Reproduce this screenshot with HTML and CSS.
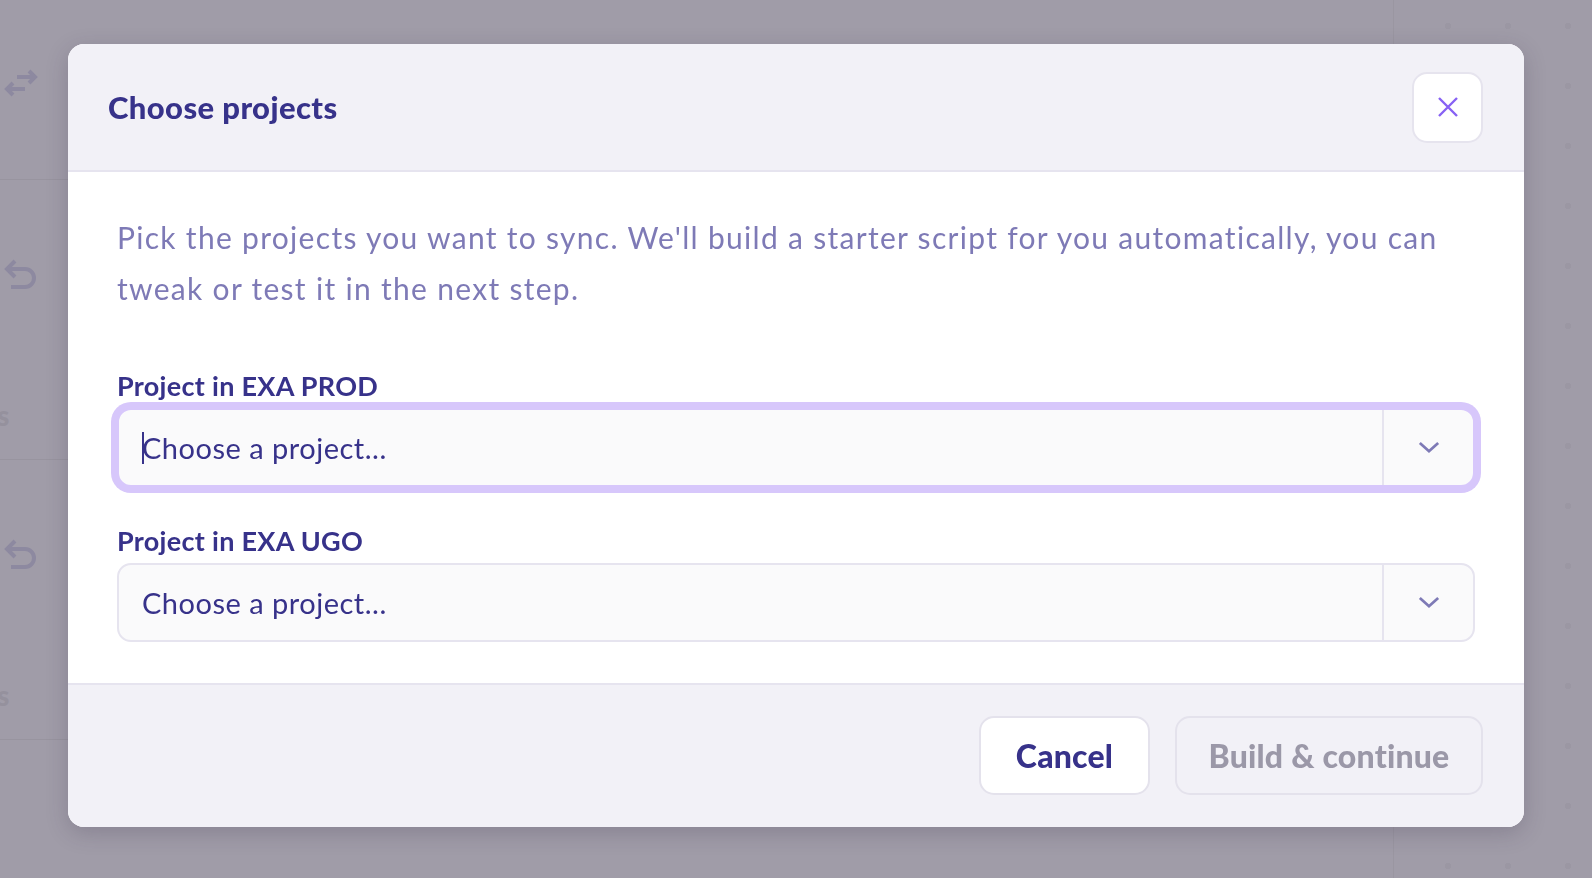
FILE: index.html
```html
<!DOCTYPE html>
<html lang="en">
<head>
  <meta charset="UTF-8" />
  <title>Choose projects</title>
  <link rel="stylesheet" href="styles.css">
</head>
<body>

  <!-- page underneath the dialog -->
  <div class="page">
    <aside class="sidebar">
      <div class="side-head">
        <svg class="side-icon" width="36" height="30" viewBox="0 0 36 30">
          <path d="M15 9 H33 M27 3 L33 9 L27 15" />
          <path d="M23 21 H5 M11 15 L5 21 L11 27" />
        </svg>
      </div>
      <div class="side-row">
        <svg class="side-icon" width="34" height="36" viewBox="0 0 34 36">
          <path d="M12 3 L4 11 L12 19 M4 11 H22 A9 9 0 0 1 22 29 H8" />
        </svg>
        <span class="side-label">s</span>
      </div>
      <div class="side-row">
        <svg class="side-icon" width="34" height="36" viewBox="0 0 34 36">
          <path d="M12 3 L4 11 L12 19 M4 11 H22 A9 9 0 0 1 22 29 H8" />
        </svg>
        <span class="side-label">s</span>
      </div>
    </aside>
    <main class="workspace"></main>
    <section class="canvas"></section>
  </div>

  <div class="overlay">
    <div class="modal">
      <header class="modal-head">
        <h2 class="modal-title">Choose projects</h2>
        <button class="btn-close" aria-label="Close">
          <svg width="22" height="22" viewBox="0 0 22 22">
            <path d="M2 2 L20 20 M20 2 L2 20" />
          </svg>
        </button>
      </header>

      <div class="modal-body">
        <p class="intro">Pick the projects you want to sync. We'll build a starter script for you automatically, you can tweak or test it in the next step.</p>

        <div class="field">
          <label class="field-label">Project in EXA PROD</label>
          <div class="select is-focused">
            <span class="select-value"><span class="caret"></span>Choose a project...</span>
            <span class="select-toggle">
              <svg width="24" height="14" viewBox="0 0 24 14"><path d="M2 2 L12 11 L22 2" /></svg>
            </span>
          </div>
        </div>

        <div class="field">
          <label class="field-label">Project in EXA UGO</label>
          <div class="select">
            <span class="select-value">Choose a project...</span>
            <span class="select-toggle">
              <svg width="24" height="14" viewBox="0 0 24 14"><path d="M2 2 L12 11 L22 2" /></svg>
            </span>
          </div>
        </div>
      </div>

      <footer class="modal-foot">
        <button class="btn btn-cancel">Cancel</button>
        <button class="btn btn-primary" disabled>Build &amp; continue</button>
      </footer>
    </div>
  </div>

</body>
</html>
```

FILE: styles.css
```css
body {
  margin: 0;
  height: 878px;
  overflow: hidden;
  background-color: #a09ca8;
  font-family: Lato, "Open Sans", sans-serif;
}

/* dimmed page */
.page {
  display: flex;
  height: 100%;
}
.sidebar {
  width: 400px;
  flex-shrink: 0;
}
.side-head {
  height: 180px;
  box-sizing: border-box;
  border-bottom: 1px solid #98949f;
  padding: 68px 0 0 2px;
}
.side-row {
  height: 280px;
  box-sizing: border-box;
  border-bottom: 1px solid #98949f;
  padding: 78px 0 0 3px;
}
.side-icon {
  display: block;
  fill: none;
  stroke: #8d89a0;
  stroke-width: 4;
}
.side-label {
  display: block;
  margin: 104px 0 0 -6px;
  font-size: 28px;
  font-weight: 900;
  color: #95919d;
}
.workspace {
  flex: 1;
}
.canvas {
  width: 198px;
  border-left: 1px solid #9a96a1;
  background-image: radial-gradient(circle, #9b97a3 3px, transparent 3.5px);
  background-size: 60px 60px;
  background-position: 24px -4px;
}

/* dialog */
.overlay {
  position: fixed;
  top: 0;
  left: 0;
  right: 0;
  bottom: 0;
  display: flex;
  justify-content: center;
  align-items: flex-start;
  padding-top: 44px;
}
.modal {
  width: 1456px;
  background-color: #ffffff;
  border-radius: 16px;
  overflow: hidden;
  box-shadow: 0 6px 22px rgba(50, 40, 70, 0.22);
}
.modal-head {
  height: 128px;
  box-sizing: border-box;
  display: flex;
  align-items: center;
  justify-content: space-between;
  padding: 0 41px 0 40px;
  background-color: #f2f1f7;
  border-bottom: 2px solid #e6e4ef;
}
.modal-title {
  margin: 0;
  font-size: 31px;
  font-weight: 900;
  letter-spacing: 0.4px;
  color: #37328a;
}
.btn-close {
  width: 71px;
  height: 71px;
  padding: 0;
  display: flex;
  align-items: center;
  justify-content: center;
  background-color: #ffffff;
  border: 2px solid #e6e4ee;
  border-radius: 15px;
}
.btn-close svg {
  fill: none;
  stroke: #8761f4;
  stroke-width: 2.4;
}

.modal-body {
  padding: 40px 49px 41px 49px;
}
.intro {
  margin: 0 0 56px;
  font-size: 30px;
  line-height: 51px;
  letter-spacing: 1.3px;
  color: #7e7ab6;
}
.field + .field {
  margin-top: 38px;
}
.field-label {
  display: block;
  margin-bottom: 6px;
  font-size: 27px;
  line-height: 32px;
  font-weight: bold;
  letter-spacing: 0.3px;
  color: #37328a;
}
.select {
  height: 79px;
  box-sizing: border-box;
  display: flex;
  background-color: #fafafb;
  border: 2px solid #e6e4ef;
  border-radius: 14px;
}
.select.is-focused {
  border-color: #d7c7fb;
  box-shadow: 0 0 0 6px #d7c7fb;
}
.select-value {
  flex: 1;
  display: flex;
  align-items: center;
  padding-left: 23px;
  font-size: 29px;
  letter-spacing: 0.5px;
  color: #37328a;
}
.caret {
  display: inline-block;
  width: 2px;
  height: 32px;
  margin-right: -2px;
  background-color: #37328a;
}
.select-toggle {
  width: 89px;
  display: flex;
  align-items: center;
  justify-content: center;
  border-left: 2px solid #e6e4ef;
}
.select-toggle svg {
  width: 22px;
  height: 13px;
  fill: none;
  stroke: #7e7ab6;
  stroke-width: 3;
}

.modal-foot {
  height: 144px;
  box-sizing: border-box;
  display: flex;
  align-items: center;
  justify-content: flex-end;
  gap: 25px;
  padding: 0 41px 2px;
  background-color: #f2f1f7;
  border-top: 2px solid #e6e4ef;
}
.btn {
  height: 79px;
  padding: 0;
  font-family: Lato, "Open Sans", sans-serif;
  font-size: 32px;
  font-weight: 900;
  letter-spacing: 0.2px;
  border: 2px solid #e4e2ec;
  border-radius: 15px;
}
.btn-cancel {
  width: 171px;
  background-color: #ffffff;
  color: #37328a;
}
.btn-primary {
  width: 308px;
  background-color: transparent;
  color: #9b98a8;
}
```
